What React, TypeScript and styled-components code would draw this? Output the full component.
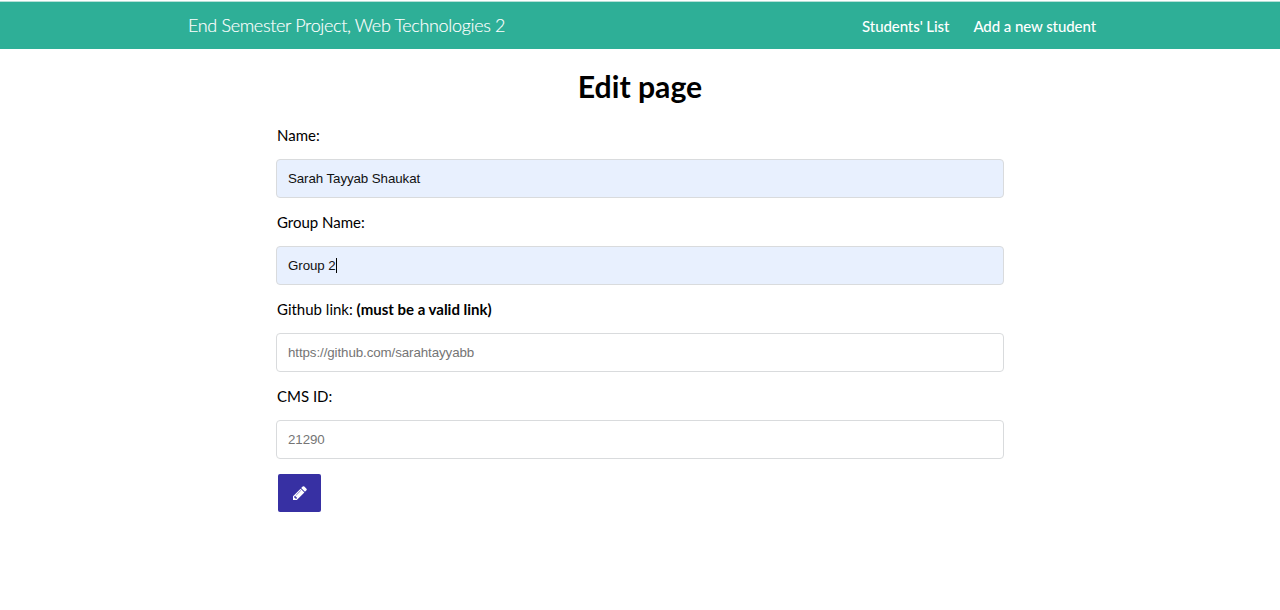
import React from "react";
import styled, { createGlobalStyle } from "styled-components";

const GlobalStyle = createGlobalStyle`
  *, *::before, *::after { box-sizing: border-box; }
  body { margin: 0; background: #fff; color: #000; font: 400 16px/1.5 Lato, sans-serif; overflow: hidden; }
`;
const Header = styled.header`
  margin-top: 1px;
  height: 48px;
  background: #2eaf97;
  border-top: 1px solid #b5e0d7;
  padding: 0 184px 0 188px;
  display: flex;
  align-items: center;
  justify-content: space-between;
  color: #fff;
`;
const Brand = styled.span`
  padding-bottom: 2px;
  font-weight: 300;
  font-size: 18px;
  line-height: 24px;
  letter-spacing: -0.34px;
  -webkit-text-stroke: 0.15px #fff;
`;
const Nav = styled.nav`
  display: flex;
  gap: 24px;
  padding-top: 1px;
`;
const NavLink = styled.a`
  font-size: 15px;
  font-weight: 500;
  line-height: 24px;
  letter-spacing: -0.08px;
  color: #fff;
`;
const Main = styled.main`
  width: 728px;
  margin: 0 auto;
`;
const Title = styled.h1`
  margin: 18px 0 0;
  font-size: 30.2px;
  line-height: 38px;
  font-weight: 700;
  text-align: center;
`;
const Form = styled.form`
  padding-top: 18px;
`;
const Field = styled.div`
  height: 87.1px;
`;
const Label = styled.label`
  display: block;
  padding-left: 1px;
  font-size: 15px;
  line-height: 24px;
`;
const Input = styled.div<{ $filled?: boolean }>`
  display: flex;
  align-items: center;
  margin-top: 11.5px;
  height: 39.2px;
  padding: 0 11px;
  border: 1px solid #d9dbdd;
  border-radius: 4px;
  background: ${(p) => (p.$filled ? "#e8f0fe" : "#fff")};
  color: ${(p) => (p.$filled ? "#111" : "#757575")};
  font: 13.33px "Liberation Sans", Arial, sans-serif;
  letter-spacing: -0.09px;
`;
const Caret = styled.span`
  width: 1px;
  height: 15px;
  background: #000;
`;
const EditButton = styled.button`
  display: flex;
  align-items: center;
  justify-content: center;
  margin: 2.6px 0 0 2px;
  width: 43px;
  height: 38px;
  padding: 0;
  border: 0;
  border-radius: 2px;
  background: #3730a3;
  color: #fff;
`;

export default function App() {
  return (
    <>
      <GlobalStyle />
      <Header>
        <Brand>End Semester Project, Web Technologies 2</Brand>
        <Nav>
          <NavLink>Students' List</NavLink>
          <NavLink>Add a new student</NavLink>
        </Nav>
      </Header>
      <Main>
        <Title>Edit page</Title>
        <Form>
          <Field>
            <Label>Name:</Label>
            <Input $filled>Sarah Tayyab Shaukat</Input>
          </Field>
          <Field>
            <Label>Group Name:</Label>
            <Input $filled>Group 2<Caret /></Input>
          </Field>
          <Field>
            <Label>Github link: <b>(must be a valid link)</b></Label>
            <Input>https://github.com/sarahtayyabb</Input>
          </Field>
          <Field>
            <Label>CMS ID:</Label>
            <Input>21290</Input>
          </Field>
          <EditButton type="button" aria-label="Edit">
            <svg width="14" height="14" viewBox="0 128 1536 1536" fill="currentColor">
              <path d="M363 1536l91-91-235-235-91 91v107h128v128h107zM886 608q0-22-22-22-10 0-17 7l-542 542q-7 7-7 17 0 22 22 22 10 0 17-7l542-542q7-7 7-17zM832 416l416 416-832 832H0v-416zM1515 512q0 53-37 90l-166 166-416-416 165-165q36-38 91-38 53 0 91 38l235 234q37 39 37 91z" />
            </svg>
          </EditButton>
        </Form>
      </Main>
    </>
  );
}
